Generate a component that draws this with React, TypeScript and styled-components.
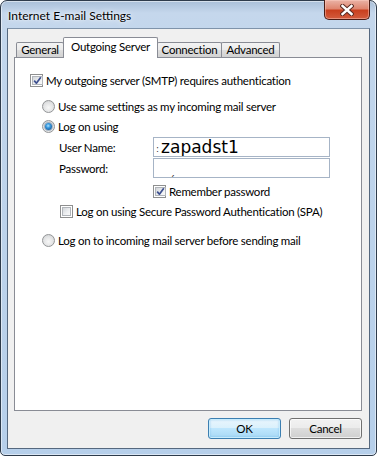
import React from 'react'
import styled, { createGlobalStyle, css } from 'styled-components'

const GlobalStyle = createGlobalStyle`
  html, body {
    margin: 0;
    padding: 0;
    background: #ffffff;
  }
  body {
    font-family: Lato, "Noto Sans", sans-serif;
    font-size: 11.5px;
    letter-spacing: -0.25px;
    color: #000;
  }
`

const Window = styled.div`
  box-sizing: border-box;
  width: 377px;
  height: 456px;
  display: flex;
  flex-direction: column;
  padding: 0 6px 6px 6px;
  border: 1px solid #2e3b4b;
  border-radius: 7px 7px 5px 5px;
  background: linear-gradient(180deg, #a9bfd8 0px, #c5d7ec 12px, #c2d6ec 40px, #b6cfea 100%);
  box-shadow: inset 0 0 0 1px rgba(255, 255, 255, .5);
`

const TitleBar = styled.div`
  height: 27px;
  display: flex;
  align-items: flex-start;
`

const Title = styled.span`
  margin: 7px 0 0 1px;
  font-size: 12px;
  letter-spacing: 0;
  line-height: 15px;
  color: #000;
  text-shadow: 0 0 6px rgba(255, 255, 255, .95), 0 0 2px rgba(255, 255, 255, .8);
`

const CloseButton = styled.div`
  box-sizing: border-box;
  width: 46px;
  height: 20px;
  margin: -1px 0 0 auto;
  border: 1px solid #4a1c15;
  border-top: none;
  border-radius: 0 0 5px 5px;
  background: linear-gradient(180deg, #eab3a6 0%, #df8670 45%, #c9401f 55%, #d35c3e 100%);
  box-shadow: inset 0 0 0 1px rgba(255, 210, 200, .45);
  display: flex;
  align-items: center;
  justify-content: center;
`

const Client = styled.div`
  flex: 1;
  box-sizing: border-box;
  display: flex;
  flex-direction: column;
  padding: 8px 7px 9px 6px;
  border: 1px solid #55687f;
  border-top-color: #7f93aa;
  background: #f0f0f0;
`

const TabStrip = styled.div`
  height: 20px;
  display: flex;
  align-items: flex-end;
  padding-left: 2px;
  position: relative;
  z-index: 1;
`

const Tab = styled.div<{ $width: number; $active?: boolean }>`
  box-sizing: border-box;
  width: ${p => p.$width}px;
  height: 15px;
  margin-right: -1px;
  border: 1px solid #898c95;
  border-bottom: none;
  border-radius: 2px 2px 0 0;
  background: linear-gradient(180deg, #f3f3f3 0%, #ebebeb 50%, #dedede 50%, #d2d2d2 100%);
  display: flex;
  align-items: center;
  justify-content: center;
  line-height: 14px;
  white-space: nowrap;

  ${p => p.$active && css`
    height: 21px;
    margin-bottom: -1px;
    padding-bottom: 2px;
    background: #ffffff;
    position: relative;
    z-index: 2;
  `}
`

const Panel = styled.div`
  flex: 1;
  box-sizing: border-box;
  border: 1px solid #898c95;
  background: #ffffff;
  padding: 12px 0 0 15px;
  display: flex;
  flex-direction: column;
`

const Row = styled.div<{ $indent?: number; $top?: number }>`
  height: 20px;
  display: flex;
  align-items: center;
  margin-left: ${p => p.$indent ?? 0}px;
  margin-top: ${p => p.$top ?? 0}px;
  white-space: nowrap;
`

const Label = styled.span`
  margin-left: 3px;
  line-height: 15px;
`

const FieldLabel = styled.span`
  width: 94px;
  flex: none;
  line-height: 15px;
`

const CheckBox = styled.span`
  box-sizing: border-box;
  width: 13px;
  height: 13px;
  flex: none;
  border: 1px solid #8e8f8f;
  background: #fff;
  padding: 1px;
  display: flex;

  & > span {
    flex: 1;
    border: 1px solid #b1b5ba;
    background: linear-gradient(135deg, #d3d6da 0%, #eef0f2 60%, #f9f9f9 100%);
    display: flex;
    align-items: center;
    justify-content: center;
  }
`

const Radio = styled.span<{ $on?: boolean }>`
  box-sizing: border-box;
  width: 13px;
  height: 13px;
  flex: none;
  border-radius: 50%;
  border: 1px solid #939597;
  background: radial-gradient(circle at 50% 60%, #f7f7f7 0%, #e2e3e4 55%, #c9cbcd 100%);
  display: flex;
  align-items: center;
  justify-content: center;

  &::after {
    content: '';
    display: ${p => (p.$on ? 'block' : 'none')};
    width: 7px;
    height: 7px;
    border-radius: 50%;
    background: radial-gradient(circle at 45% 40%, #aee2ff 0%, #3a9be0 35%, #17599a 80%, #0e3d6e 100%);
    box-shadow: 0 0 0 1px rgba(40, 80, 120, .35);
  }
`

const TextBox = styled.div`
  box-sizing: border-box;
  width: 177px;
  height: 20px;
  border: 1px solid #a6b4c6;
  background: #ffffff;
  display: flex;
  align-items: flex-end;
  padding-left: 2px;
  overflow: hidden;
  letter-spacing: 0;
`

const Colon = styled.span`
  font-family: "DejaVu Sans", sans-serif;
  font-size: 9px;
  line-height: 13px;
  margin-right: 2px;
  color: #333;
`

const BigValue = styled.span`
  font-family: "DejaVu Sans", sans-serif;
  font-size: 17px;
  line-height: 18px;
  color: #000;
`

const Mark = styled.span`
  font-family: "DejaVu Sans", sans-serif;
  font-size: 10px;
  line-height: 12px;
  margin-left: 14px;
  color: #222;
`

const ButtonRow = styled.div`
  display: flex;
  justify-content: flex-end;
  gap: 8px;
  margin-top: 7px;
`

const Button = styled.div<{ $default?: boolean }>`
  box-sizing: border-box;
  width: 73px;
  height: 21px;
  border: 1px solid #707070;
  border-radius: 3px;
  background: linear-gradient(180deg, #f2f2f2 0%, #ebebeb 50%, #dddddd 50%, #cfcfcf 100%);
  box-shadow: inset 0 0 0 1px rgba(255, 255, 255, .7);
  display: flex;
  align-items: center;
  justify-content: center;
  line-height: 15px;

  ${p => p.$default && css`
    border-color: #3c7fb1;
    background: linear-gradient(180deg, #eaf6fd 0%, #d9f0fc 50%, #bee6fd 50%, #a7d9f5 100%);
    box-shadow: inset 0 0 0 1px #c8ecfd, inset 0 0 2px 1px rgba(80, 170, 230, .5);
  `}
`

const Check = ({ checked }: { checked?: boolean }) => (
  <CheckBox>
    <span>
      {checked && (
        <svg width="9" height="9" viewBox="0 0 9 9">
          <path d="M1.2 4.6 L3.4 7.2 L7.8 1.2" fill="none" stroke="#3d4f8f" strokeWidth="1.7" strokeLinejoin="round" />
        </svg>
      )}
    </span>
  </CheckBox>
)

const CloseGlyph = () => (
  <svg width="14" height="12" viewBox="0 0 14 12">
    <g strokeLinecap="square">
      <path d="M2.5 2 L11.5 10 M11.5 2 L2.5 10" stroke="#5a2a22" strokeWidth="4.4" />
      <path d="M2.5 2 L11.5 10 M11.5 2 L2.5 10" stroke="#ffffff" strokeWidth="2.4" />
    </g>
  </svg>
)

const tabs = [
  { label: 'General', width: 48 },
  { label: 'Outgoing Server', width: 95, active: true },
  { label: 'Connection', width: 65 },
  { label: 'Advanced', width: 59 },
]

const App = () => {
  return (
    <>
      <GlobalStyle />
      <Window>
        <TitleBar>
          <Title>Internet E-mail Settings</Title>
          <CloseButton>
            <CloseGlyph />
          </CloseButton>
        </TitleBar>
        <Client>
          <TabStrip>
            {tabs.map(t => (
              <Tab key={t.label} $width={t.width} $active={t.active}>{t.label}</Tab>
            ))}
          </TabStrip>
          <Panel>
            <Row>
              <Check checked />
              <Label>My outgoing server (SMTP) requires authentication</Label>
            </Row>
            <Row $indent={12} $top={6}>
              <Radio />
              <Label>Use same settings as my incoming mail server</Label>
            </Row>
            <Row $indent={12}>
              <Radio $on />
              <Label>Log on using</Label>
            </Row>
            <Row $indent={29} $top={1}>
              <FieldLabel>User Name:</FieldLabel>
              <TextBox>
                <Colon>:</Colon>
                <BigValue>zapadst1</BigValue>
              </TextBox>
            </Row>
            <Row $indent={29} $top={1}>
              <FieldLabel>Password:</FieldLabel>
              <TextBox>
                <Mark>ˏ</Mark>
              </TextBox>
            </Row>
            <Row $indent={123} $top={3}>
              <Check checked />
              <Label>Remember password</Label>
            </Row>
            <Row $indent={30}>
              <Check />
              <Label>Log on using Secure Password Authentication (SPA)</Label>
            </Row>
            <Row $indent={12} $top={9}>
              <Radio />
              <Label>Log on to incoming mail server before sending mail</Label>
            </Row>
          </Panel>
          <ButtonRow>
            <Button $default>OK</Button>
            <Button>Cancel</Button>
          </ButtonRow>
        </Client>
      </Window>
    </>
  )
}

export default App
